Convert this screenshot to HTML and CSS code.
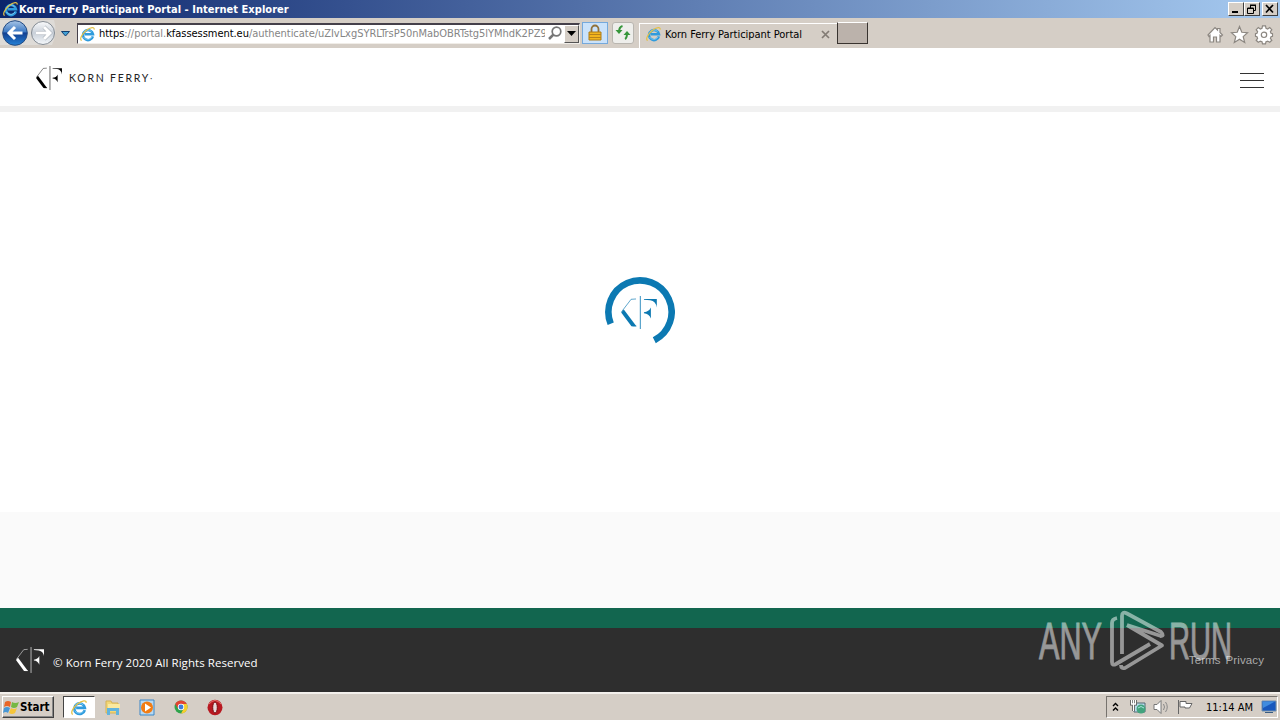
FILE: index.html
```
<!DOCTYPE html>
<html lang="en">
<head>
    <meta charset="UTF-8">
    <title>Korn Ferry Participant Portal</title>
    <link rel="stylesheet" href="styles.css">
</head>
<body>
    <!-- shared symbols -->
    <svg class="defs" width="0" height="0">
        <linearGradient id="blue" x1="0" y1="0" x2="0" y2="1">
            <stop offset="0" stop-color="#a9c6e6"/>
            <stop offset="0.45" stop-color="#3c79c4"/>
            <stop offset="0.5" stop-color="#123f91"/>
            <stop offset="1" stop-color="#2582d6"/>
        </linearGradient>
        <linearGradient id="pale" x1="0" y1="0" x2="0" y2="1">
            <stop offset="0" stop-color="#fafbfc"/>
            <stop offset="0.5" stop-color="#c9d0d9"/>
            <stop offset="1" stop-color="#f5f8fb"/>
        </linearGradient>
        <symbol id="ie" viewBox="0 0 16 16">
            <path d="M13.4 10.4A5 5 0 1 1 13.5 8.3H5.3" fill="none" stroke="#2f9bdd" stroke-width="2.5"/>
            <path d="M12.5 10.9A5 5 0 0 1 4 11M4.300 6Q8 2 12 5.500" fill="none" stroke="#8ad2f5" stroke-width="0.8"/>
            <path d="M2.2 14.5C-.3 13.700 2 8.400 6.500 4.700S15.500 .700 14.600 3.700" fill="none" stroke="#e3c046" stroke-width="1.2"/>
        </symbol>
        <symbol id="kf" viewBox="0 0 108 100">
            <path d="M45 9L30 10L1 48M34 91H46" fill="none" stroke="currentColor" stroke-width="2"/>
            <path d="M0 50L8 41L46 92H31Z" fill="currentColor"/>
            <path d="M58 0V100" stroke="currentColor" stroke-width="2.500"/>
            <path d="M69 9H108V35Q105 16 88 13L69 11Z" fill="currentColor"/>
            <path d="M69 49Q84 48 90 35V68Q84 53 69 52Z" fill="currentColor"/>
        </symbol>
    </svg>

    <div class="titlebar">
        <svg class="title-icon" width="17" height="16"><use href="#ie"/></svg>
        <span class="title-text">Korn Ferry Participant Portal - Internet Explorer</span>
        <div class="window-buttons">
            <button class="win-btn"><svg width="12" height="10"><path d="M2 8H8" stroke="#000" stroke-width="2"/></svg></button>
            <button class="win-btn"><svg width="12" height="10"><path d="M4 1H10M4 1.500H10M9.500 1V6.500H8M4.500 1V4M1.500 4V9.500H7.500V4Z M1.500 4.500H7.500" fill="none" stroke="#000"/></svg></button>
            <button class="win-btn close"><svg width="12" height="10"><path d="M2 1L9 8.500M9 1L2 8.500" stroke="#000" stroke-width="1.700"/></svg></button>
        </div>
    </div>

    <div class="navbar">
        <svg class="history" width="74" height="30" viewBox="0 0 74 30">
            <path d="M0 2H54Q58 15 52 27H0Z" fill="#dedbd7"/>
            <circle cx="15" cy="15" r="12.300" fill="url(#blue)" stroke="#254c83"/>
            <path d="M22.500 15H9.500M15 9L9 15L15 21" fill="none" stroke="#fff" stroke-width="3"/>
            <circle cx="43" cy="15" r="11.500" fill="url(#pale)" stroke="#858c94"/>
            <path d="M36 15H49M44 9L50 15L44 21" fill="none" stroke="#a4abb4" stroke-width="4"/>
            <path d="M36 15H49M44 9L50 15L44 21" fill="none" stroke="#fff" stroke-width="3"/>
            <path d="M61.500 13.500H69.500L65.500 18Z" fill="#41a0d5" stroke="#123f70"/>
        </svg>
        <div class="address">
            <svg class="address-icon" width="17" height="16"><use href="#ie"/></svg>
            <span class="url"><b>https</b>://portal.<b>kfassessment.eu</b>/authenticate/uZIvLxgSYRLTrsP50nMabOBRTstg5lYMhdK2PZ9</span>
            <svg class="search" width="17" height="17"><circle cx="9.500" cy="6.500" r="4.300" fill="none" stroke="#777" stroke-width="1.700"/><path d="M6.500 9.500L2 14" stroke="#777" stroke-width="2.500"/></svg>
            <button class="dropdown"><svg width="9" height="5"><path d="M0 0H9L4.500 5Z"/></svg></button>
        </div>
        <div class="lock">
            <svg width="16" height="18"><path d="M4.500 9V5A3.500 3.500 0 0 1 11.500 5V9" fill="none" stroke="#917138" stroke-width="1.800"/><path d="M2 8H14V16H2Z" fill="#f3b51d" stroke="#ac7b18"/><path d="M2 10.500H14M2 13.500H14" stroke="#b7831b"/></svg>
        </div>
        <div class="refresh">
            <svg width="16" height="16"><path d="M7.500 1Q4 2 4 7M10 14Q12 13 12 8" fill="none" stroke="#36963a" stroke-width="2"/><path d="M.5 5H7.500L4 9ZM8.500 10H15.500L12 6Z" fill="#36963a"/></svg>
        </div>
        <div class="tab">
            <svg width="17" height="16"><use href="#ie"/></svg>
            <span class="tab-text">Korn Ferry Participant Portal</span>
            <svg class="tab-close" width="9" height="9"><path d="M1 1L8 8M8 1L1 8" stroke="#827b74" stroke-width="1.700"/></svg>
        </div>
        <div class="new-tab"></div>
        <svg class="tools" width="70" height="20" viewBox="0 0 70 20">
            <g fill="#fff" stroke="#8c8781" stroke-width="1.200">
                <path d="M1 10L8 2.500L10.500 5V3.500H13V7.500L15.500 10L14 11.500L13 10.500V17H9.500V12H6.500V17H3V10.500L2 11.500Z"/>
                <path d="M32.500 1.500L34.800 7.300L40.500 7.700L36.200 11.600L37.700 17.500L32.500 14.200L27.300 17.500L28.800 11.600L24.500 7.700L30.200 7.300Z"/>
                <path d="M55.500 1.500H58.500L59 4L60.700 4.700L62.700 3.300L64.800 5.400L63.400 7.400L64 9L65.500 9.500V12L64 12.500L63.400 14L64.800 16L62.700 18L60.700 16.800L59 17.400L58.500 19.500H55.500L55 17.400L53.300 16.800L51.300 18L49.200 16L50.600 14L50 12.500L48.500 12V9.500L50 9L50.600 7.400L49.200 5.400L51.300 3.300L53.300 4.700L55 4Z" transform="translate(0 -.700)"/>
                <circle cx="57" cy="9.800" r="2.700"/>
            </g>
        </svg>
    </div>

    <header class="site-header">
        <div class="brand">
            <svg width="26" height="24"><use href="#kf"/></svg>
            <span class="brand-name">KORN FERRY<small>·</small></span>
        </div>
        <div class="hamburger"><span></span><span></span><span></span></div>
    </header>

    <main class="content">
        <svg class="spinner" width="70" height="70" viewBox="-35 -35 70 70">
            <path d="M-29.300 11.800A31.600 31.600 0 1 1 14.300 28.200" fill="none" stroke="#0c79b2" stroke-width="6.600"/>
            <use href="#kf" x="-19" y="-16" width="36" height="33"/>
        </svg>
    </main>
    <div class="spacer"></div>

    <footer class="site-footer">
        <svg class="footer-logo" width="28" height="26"><use href="#kf"/></svg>
        <span class="copyright">© Korn Ferry 2020 All Rights Reserved</span>
        <nav class="links"><a>Terms</a><a>Privacy</a></nav>
    </footer>

    <svg class="watermark" width="200" height="66" viewBox="0 0 200 66">
        <g fill="#fff" stroke="#fff" stroke-width="0.900" font-family="Liberation Sans Narrow, Liberation Sans, sans-serif" font-size="52">
            <text x="3" y="51" textLength="63" lengthAdjust="spacingAndGlyphs">ANY</text>
            <text x="133" y="51" textLength="63" lengthAdjust="spacingAndGlyphs">RUN</text>
        </g>
        <g fill="none" stroke="#fff" stroke-width="3.800" stroke-linejoin="round">
            <path d="M81 10Q76 11 76 15V54Q76 58 80 56L114 36"/>
            <path d="M86 46V8Q86 3 91 5.500L125 24Q129 28 124 28"/>
            <path d="M91 17L126 37.500L89 60Q85 61 85 57M91 17L125 28"/>
        </g>
    </svg>

    <div class="taskbar">
        <button class="start">
            <svg width="17" height="17"><path d="M2 3Q5 1 8 3L7 8Q4 6 1 8Z" fill="#e96627"/><path d="M9 3Q12 5 16 3L14 8Q11 10 8 8Z" fill="#75b843"/><path d="M1 9Q4 7 7 9L5 14Q3 12 0 14Z" fill="#4797d5"/><path d="M8 9Q11 11 14 9L12 14Q9 16 6 14Z" fill="#f5c53a"/></svg>
            <span>Start</span>
        </button>
        <div class="task active"><svg width="18" height="17"><use href="#ie"/></svg></div>
        <div class="task"><svg width="16" height="17"><path d="M1 2H6L7 4H13V14H1Z" fill="#f2d778" stroke="#d4b255"/><path d="M3 5H15V9H3Z" fill="#fae99f"/><path d="M2 16V9H14V16H11V12H5V16Z" fill="#62b4dd"/></svg></div>
        <div class="task"><svg width="16" height="17"><path d="M1 1H15V16H1Z" fill="#b8d9f2" stroke="#3a87c8"/><circle cx="8" cy="8.500" r="6" fill="#f27c13"/><path d="M6 4.500L12 8.500L6 12.500Z" fill="#fff"/></svg></div>
        <div class="task"><svg width="14" height="14" viewBox="0 0 14 14"><circle cx="7" cy="7" r="6.500" fill="#2fa34b"/><path d="M1.200 4A6.500 6.500 0 0 1 12.800 4H7L4 8.500Z" fill="#e24332"/><path d="M7 4H12.800A6.500 6.500 0 0 1 7 13.500L10 8Z" fill="#f7ce2d"/><circle cx="7" cy="7" r="3.200" fill="#fff"/><circle cx="7" cy="7" r="2.400" fill="#3c7cdb"/></svg></div>
        <div class="task"><svg width="16" height="17"><ellipse cx="8" cy="8.500" rx="7.500" ry="7.700" fill="#b81820"/><path d="M2 5Q8-2 14 5" fill="none" stroke="#e7736e"/><ellipse cx="8" cy="8.500" rx="2.300" ry="5.500" fill="#e8dada" stroke="#77090d"/></svg></div>
        <div class="tray">
            <svg class="chevrons" width="7" height="10"><path d="M1 4L3.500 1.500L6 4M1 8.500L3.500 6L6 8.500" fill="none" stroke="#000" stroke-width="1.400"/></svg>
            <svg class="network" width="16" height="16"><path d="M4 4H15V13H4Z" fill="#b7ddec" stroke="#536872"/><circle cx="11" cy="10" r="4.500" fill="#42a37d"/><path d="M8 9Q11 6 14 9" fill="none" stroke="#a9e3dd"/><path d="M1.500 1V5H5.500V1M3.500 1V12" fill="none" stroke="#555" stroke-width="3"/><path d="M1.500 1V5H5.500V1M3.500 1V12" fill="none" stroke="#fff" stroke-width="1.300"/></svg>
            <svg class="sound" width="17" height="16"><path d="M1 5.500H4L8 1.500V14.500L4 10.500H1Z" fill="#fff" stroke="#777"/><path d="M10.500 5Q12.500 8 10.500 11M12.500 3Q16 8 12.500 13" fill="none" stroke="#888"/></svg>
            <svg class="flag" width="17" height="16"><path d="M1.500 1V15M3 2.500H9V4.500H15L12.500 9H8V8H3Z" fill="#fff" stroke="#666"/></svg>
            <span class="clock">11:14 AM</span>
            <svg class="desktop" width="16" height="14"><path d="M1 1H15V11H1Z" fill="#1858bd" stroke="#718fac"/><path d="M1.500 1.500H14L2 8Z" fill="#408cdf"/><path d="M4 12.500H12" stroke="#395c82"/></svg>
        </div>
    </div>
</body>
</html>
```
FILE: styles.css
```
* {
    margin: 0;
    padding: 0;
    box-sizing: border-box;
}

body {
    width: 1280px;
    height: 720px;
    overflow: hidden;
    display: flex;
    flex-direction: column;
    background: #fff;
    font-family: "DejaVu Sans Condensed", "DejaVu Sans", sans-serif;
    font-size: 11px;
    color: #000;
}

svg {
    display: block;
    flex-shrink: 0;
}

.defs {
    position: absolute;
}

/* browser window */
.titlebar {
    height: 18px;
    display: flex;
    align-items: center;
    padding: 0 2px;
    background: linear-gradient(90deg, #0b246b, #a6caf0);
    color: #fff;
}

.title-text {
    font-weight: bold;
    white-space: nowrap;
    letter-spacing: 0.04px;
}

.window-buttons {
    display: flex;
    margin-left: auto;
}

.win-btn {
    width: 16px;
    height: 14px;
    padding: 1px;
    background: #d5cec6;
    border: 1px solid;
    border-color: #fff #404040 #404040 #fff;
}

.close {
    margin-left: 2px;
}

.navbar {
    height: 30px;
    display: flex;
    align-items: center;
    background: #d5cec6;
}

.address {
    width: 503px;
    height: 21px;
    margin-left: 3px;
    display: flex;
    align-items: center;
    background: #fff;
    border: 1px solid #f0ede8;
    border-top: 2px solid #45404a;
    border-left: 1px solid #45404a;
}

.address-icon {
    margin: 0 3px 0 1px;
}

.url {
    width: 446px;
    overflow: hidden;
    white-space: nowrap;
    letter-spacing: -0.04px;
    color: #858585;
}

.url b {
    color: #000;
    font-weight: normal;
}

.search {
    margin-left: auto;
}

.dropdown {
    width: 15px;
    height: 18px;
    display: flex;
    align-items: center;
    justify-content: center;
    background: #d5cec6;
    border: 1px solid;
    border-color: #fff #555 #555 #fff;
}

.lock {
    width: 26px;
    height: 22px;
    margin-left: 2px;
    display: flex;
    align-items: center;
    justify-content: center;
    background: #cae2fa;
    border: 1px solid #75a9dc;
}

.refresh {
    width: 22px;
    height: 22px;
    margin-left: 4px;
    display: flex;
    align-items: center;
    justify-content: center;
    background: #eeeeeb;
    border: 1px solid #b9b6b0;
    border-radius: 3px;
}

.tab {
    width: 198px;
    height: 25px;
    align-self: flex-end;
    margin-left: 5px;
    padding: 0 7px 4px 5px;
    display: flex;
    align-items: center;
    border-top: 1px solid #fff;
    border-left: 1px solid #fff;
}

.tab-text {
    margin-left: 3px;
    white-space: nowrap;
    letter-spacing: -0.03px;
}

.tab-close {
    margin-left: auto;
}

.new-tab {
    width: 31px;
    height: 22px;
    background: #bbb2ab;
    border: 1px solid #38332f;
    border-top-color: #fff;
}

.tools {
    margin: 3px 3px 0 auto;
}

/* portal page */
.site-header {
    height: 64px;
    padding: 0 16px 0 36px;
    display: flex;
    align-items: center;
    justify-content: space-between;
    border-bottom: 6px solid #f1f1f1;
}

.brand {
    display: flex;
    align-items: center;
    gap: 7px;
    padding-top: 2px;
}

.brand-name {
    font: 10.5px/14px Lato, sans-serif;
    letter-spacing: 1.75px;
    color: #222;
}

.brand-name small {
    font-size: 7px;
    letter-spacing: 0;
    vertical-align: top;
}

.hamburger {
    width: 24px;
    display: flex;
    flex-direction: column;
    gap: 6px;
    padding-top: 7px;
}

.hamburger span {
    height: 1px;
    background: #333;
}

.content {
    height: 400px;
    display: flex;
    align-items: center;
    justify-content: center;
}

.spinner {
    color: #0c79b2;
}

.spacer {
    height: 96px;
    background: #fafafa;
}

.site-footer {
    height: 84px;
    padding: 0 16px;
    display: flex;
    align-items: center;
    background: #2e2e2e;
    border-top: 20px solid #12664f;
    color: #fff;
}

.copyright {
    margin: 5px 0 0 9px;
    font: 11.5px/16px "Open Sans", sans-serif;
    letter-spacing: 0.06px;
}

.links {
    display: flex;
    gap: 5px;
    margin-left: auto;
    font: 11.5px/16px "Liberation Sans", sans-serif;
    letter-spacing: 0.1px;
    color: #aaa;
}

.watermark {
    position: absolute;
    left: 1036px;
    top: 608px;
    opacity: 0.5;
}

/* Windows taskbar */
.taskbar {
    height: 28px;
    padding: 2px 2px 2px;
    display: flex;
    align-items: center;
    background: #d5cec6;
    border-top: 2px solid #f3f0ec;
}

.start {
    width: 52px;
    height: 22px;
    display: flex;
    align-items: center;
    padding-left: 0;
    background: #d5cec6;
    border: 1px solid;
    border-color: #fff #404040 #404040 #fff;
    box-shadow: inset -1px -1px #888;
    font: bold 11.5px "DejaVu Sans Condensed", "DejaVu Sans", sans-serif;
}

.task {
    width: 34px;
    height: 22px;
    display: flex;
    align-items: center;
    justify-content: center;
}

.active {
    width: 32px;
    margin: 0 1px 0 9px;
    background: #fff;
    border: 1px solid;
    border-color: #444 #fff #fff #444;
}

.tray {
    width: 172px;
    height: 22px;
    margin-left: auto;
    display: flex;
    align-items: center;
    padding-left: 5px;
    border: 1px solid;
    border-color: #77736e #fff #fff #77736e;
}

.network {
    margin-left: 11px;
}

.sound,
.flag {
    margin-left: 7px;
}

.clock {
    margin: 0 auto 0 12px;
    white-space: nowrap;
}
```
